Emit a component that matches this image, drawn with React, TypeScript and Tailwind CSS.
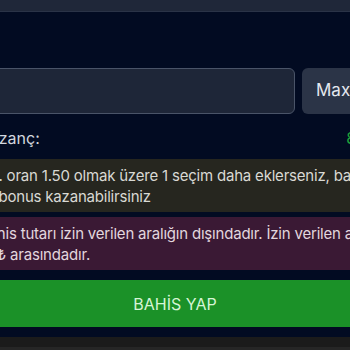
export default function App() {
  return (
    <div className="w-[350px] h-[350px] overflow-hidden bg-[#020b22] font-['Inter',sans-serif] text-[15px]">
      <div className="-ml-[40px] w-[440px] flex flex-col">
        <div className="h-[12px] bg-[#1f2739] border-b border-[#2a3347]" />

        <div className="mt-[56px] flex gap-[7px] h-[46px]">
          <div className="flex-1 rounded-[6px] border border-[#4a5468] bg-[#1e2638]" />
          <button className="w-[98px] rounded-[6px] bg-[#2b3447] text-left pl-[14px] text-[17px] text-[#e4e8ef]">
            Max
          </button>
        </div>

        <div className="mt-[12px] flex justify-between items-center h-[24px] pl-[19px] pr-[6px] text-[16px]">
          <span className="text-[#d3d7df]">Kazanç:</span>
          <span className="text-[#1fa33c]">8,50 ₺</span>
        </div>

        <div className="mt-[9px] bg-[#26261f] pl-[13px] pt-[6px] pb-[5px] leading-[21px] tracking-[-0.2px] text-[#d9d9d4] whitespace-nowrap">
          Min. oran 1.50 olmak üzere 1 seçim daha eklerseniz, bahis
          <br />
          <span className="inline-block ml-[-2px]">%5 bonus kazanabilirsiniz</span>
        </div>

        <div className="mt-[5px] bg-[#3a1934] pl-[19px] pt-[6px] pb-[5px] leading-[21px] tracking-[-0.2px] text-[#e2d6de] whitespace-nowrap">
          Bahis tutarı izin verilen aralığın dışındadır. İzin verilen aralık
          <br />
          <span className="inline-block -ml-[35px]">50.000 ₺ arasındadır.</span>
        </div>

        <div className="mt-[10px] h-[47px] bg-[#1b9128] flex items-center justify-center pr-[10px] text-[16px] text-[#d6f5d6]">
          BAHİS YAP
        </div>

        <div className="mt-[10px] h-[10px] bg-[#1b1b1b]" />
        <div className="h-[4px] bg-[#262626]" />
      </div>
    </div>
  );
}
